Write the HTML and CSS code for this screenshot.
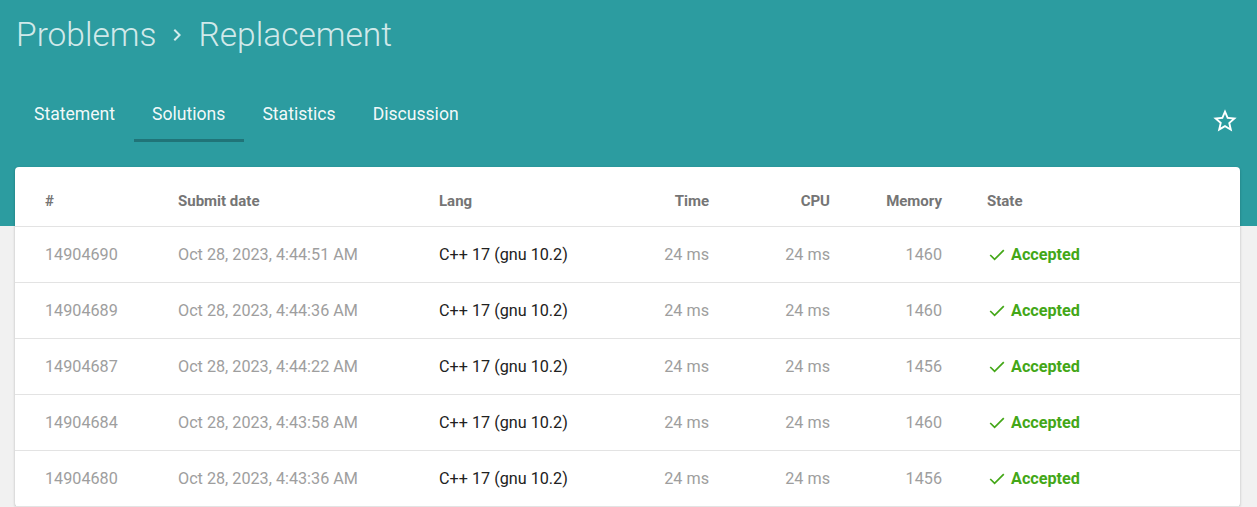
FILE: index.html
```html
<!DOCTYPE html>
<html lang="en">
<head>
<meta charset="utf-8">
<title>Replacement - Solutions</title>
<link rel="stylesheet" href="styles.css">
</head>
<body>
<header class="appbar">
  <h1 class="crumbs">
    <span>Problems</span>
    <svg class="chev" viewBox="0 0 24 24" width="24" height="24"><path d="M10 6L8.59 7.41 13.17 12l-4.58 4.59L10 18l6-6z" fill="currentColor"/></svg>
    <span>Replacement</span>
  </h1>
  <nav class="tabs">
    <a class="tab">Statement</a>
    <a class="tab active">Solutions</a>
    <a class="tab">Statistics</a>
    <a class="tab">Discussion</a>
    <svg class="star" viewBox="0 0 24 24" width="28" height="28"><path fill="currentColor" d="M22 9.24l-7.19-.62L12 2 9.19 8.63 2 9.24l5.46 4.73L5.82 21 12 17.27 18.18 21l-1.63-7.030L22 9.24zM12 15.4l-3.76 2.27 1-4.28-3.32-2.88 4.38-.38L12 6.1l1.71 4.04 4.38.38-3.320 2.88 1 4.28L12 15.4z"/></svg>
  </nav>
</header>

<main class="card">
  <div class="row head">
    <div>#</div>
    <div>Submit date</div>
    <div>Lang</div>
    <div class="num">Time</div>
    <div class="num">CPU</div>
    <div class="num">Memory</div>
    <div class="state">State</div>
  </div>
  <div class="row">
    <div>14904690</div><div>Oct 28, 2023, 4:44:51 AM</div><div class="lang">C++ 17 (gnu 10.2)</div>
    <div class="num">24 ms</div><div class="num">24 ms</div><div class="num">1460</div>
    <div class="state ok"><svg viewBox="0 0 16 12" width="16" height="12"><polyline points="1.2,6 5.6,10.4 14.8,1.2" fill="none" stroke="currentColor" stroke-width="1.7"/></svg>Accepted</div>
  </div>
  <div class="row">
    <div>14904689</div><div>Oct 28, 2023, 4:44:36 AM</div><div class="lang">C++ 17 (gnu 10.2)</div>
    <div class="num">24 ms</div><div class="num">24 ms</div><div class="num">1460</div>
    <div class="state ok"><svg viewBox="0 0 16 12" width="16" height="12"><polyline points="1.2,6 5.6,10.4 14.8,1.2" fill="none" stroke="currentColor" stroke-width="1.7"/></svg>Accepted</div>
  </div>
  <div class="row">
    <div>14904687</div><div>Oct 28, 2023, 4:44:22 AM</div><div class="lang">C++ 17 (gnu 10.2)</div>
    <div class="num">24 ms</div><div class="num">24 ms</div><div class="num">1456</div>
    <div class="state ok"><svg viewBox="0 0 16 12" width="16" height="12"><polyline points="1.2,6 5.6,10.4 14.8,1.2" fill="none" stroke="currentColor" stroke-width="1.7"/></svg>Accepted</div>
  </div>
  <div class="row">
    <div>14904684</div><div>Oct 28, 2023, 4:43:58 AM</div><div class="lang">C++ 17 (gnu 10.2)</div>
    <div class="num">24 ms</div><div class="num">24 ms</div><div class="num">1460</div>
    <div class="state ok"><svg viewBox="0 0 16 12" width="16" height="12"><polyline points="1.2,6 5.6,10.4 14.8,1.2" fill="none" stroke="currentColor" stroke-width="1.7"/></svg>Accepted</div>
  </div>
  <div class="row">
    <div>14904680</div><div>Oct 28, 2023, 4:43:36 AM</div><div class="lang">C++ 17 (gnu 10.2)</div>
    <div class="num">24 ms</div><div class="num">24 ms</div><div class="num">1456</div>
    <div class="state ok"><svg viewBox="0 0 16 12" width="16" height="12"><polyline points="1.2,6 5.6,10.4 14.8,1.2" fill="none" stroke="currentColor" stroke-width="1.7"/></svg>Accepted</div>
  </div>
</main>
</body>
</html>
```

FILE: styles.css
```css
* { box-sizing: border-box; }

html, body {
  margin: 0;
  height: 100%;
  overflow: hidden;
}

body {
  background: #f1f1f1;
  font-family: Roboto, "Liberation Sans", sans-serif;
}

.appbar {
  background: #2c9ca0;
  height: 226px;
  padding: 15px 18px 0 16px;
}

.crumbs {
  margin: 0;
  display: flex;
  align-items: center;
  height: 40px;
  font-size: 33.5px;
  line-height: 40px;
  font-weight: 300;
  color: rgba(255, 255, 255, 0.8);
}

.chev {
  margin: 0 9px 0 9px;
  flex: none;
}

.tabs {
  margin: 31px 0 0 -0.5px;
  display: flex;
  height: 56px;
}

.tab {
  display: flex;
  align-items: center;
  height: 56px;
  padding: 0 18.5px 0;
  font-size: 17.6px;
  color: rgba(255, 255, 255, 0.96);
  position: relative;
}

.tab.active::after {
  content: "";
  position: absolute;
  left: 0;
  right: 0;
  bottom: 0;
  height: 3px;
  background: #207478;
}

.star {
  margin-left: auto;
  align-self: flex-end;
  margin-bottom: 7px;
  color: #fff;
}

.card {
  margin: -59px 17px 0 15px;
  background: #fff;
  border-radius: 4px;
  box-shadow: 0 1px 3px rgba(0, 0, 0, 0.2), 0 1px 1px rgba(0, 0, 0, 0.12);
  padding-top: 8px;
}

.row {
  display: grid;
  grid-template-columns: 133px 261px 170px 100px 121px 112px 1fr;
  align-items: center;
  height: 56px;
  padding-left: 30px;
  border-bottom: 1px solid #e3e3e3;
  font-size: 16.2px;
  color: #9e9e9e;
}

.row.head {
  height: 52px;
  font-size: 15px;
  font-weight: 700;
  color: #757575;
}

.num { text-align: right; }

.lang { color: #212121; }

.state {
  padding-left: 45px;
  display: flex;
  align-items: center;
}

.ok {
  color: #43a717;
  font-weight: 700;
}

.ok svg {
  margin: 0 6px 0 2px;
  flex: none;
}
```
